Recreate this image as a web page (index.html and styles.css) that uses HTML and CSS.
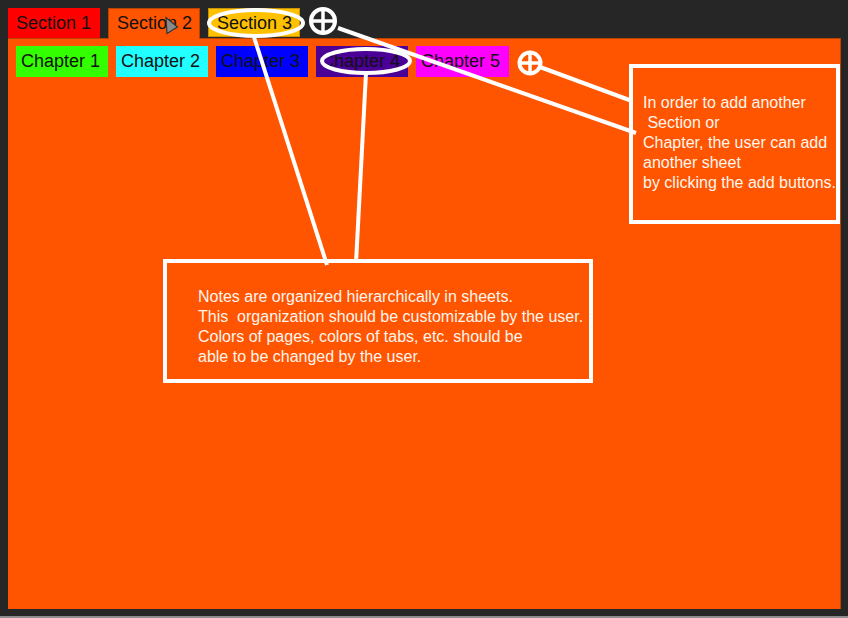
FILE: index.html
```html
<!DOCTYPE html>
<html>
<head>
<meta charset="utf-8">
<link rel="stylesheet" href="styles.css">
</head>
<body>
<div class="app">
  <div class="section-tabs">
    <div class="tab sec1">Section 1</div>
    <div class="tab sec2">Section 2</div>
    <div class="tab sec3">Section 3</div>
    <svg class="add add-section" width="30" height="30" viewBox="0 0 30 30">
      <circle cx="15" cy="15" r="12" fill="none" stroke="#fff" stroke-width="4"/>
      <line x1="3" y1="15" x2="27" y2="15" stroke="#fff" stroke-width="3.5"/>
      <line x1="15" y1="3" x2="15" y2="27" stroke="#fff" stroke-width="3.5"/>
    </svg>
  </div>
  <div class="panel">
    <div class="chapter-tabs">
      <div class="tab ch1">Chapter 1</div>
      <div class="tab ch2">Chapter 2</div>
      <div class="tab ch3">Chapter 3</div>
      <div class="tab ch4">Chapter 4</div>
      <div class="tab ch5">Chapter 5</div>
      <svg class="add add-chapter" width="26" height="26" viewBox="0 0 26 26">
        <circle cx="13" cy="13" r="10.5" fill="none" stroke="#fff" stroke-width="4"/>
        <line x1="2.5" y1="13" x2="23.5" y2="13" stroke="#fff" stroke-width="3.5"/>
        <line x1="13" y1="2.5" x2="13" y2="23.5" stroke="#fff" stroke-width="3.5"/>
      </svg>
    </div>
  </div>

  <div class="note note-main">
    Notes are organized hierarchically in sheets.<br>
    This&nbsp; organization should be customizable by the user.<br>
    Colors of pages, colors of tabs, etc. should be<br>
    able to be changed by the user.
  </div>
  <div class="note note-add">
    In order to add another<br>
    &nbsp;Section or<br>
    Chapter, the user can add<br>
    another sheet<br>
    by clicking the add buttons.
  </div>

  <svg class="overlay" width="848" height="618" viewBox="0 0 848 618">
    <g fill="none" stroke="#fff" stroke-width="4">
      <ellipse cx="256" cy="23" rx="47" ry="13"/>
      <ellipse cx="366" cy="61" rx="44" ry="12"/>
      <line x1="254" y1="37" x2="327" y2="265"/>
      <line x1="366" y1="73" x2="356" y2="263"/>
      <line x1="338" y1="28" x2="636" y2="133"/>
      <line x1="540" y1="67" x2="632" y2="101"/>
    </g>
    <polygon points="166,17.5 177.5,27 167,33.5" fill="#8a8a8a" stroke="#333" stroke-width="1.2"/>
  </svg>
</div>
</body>
</html>
```
FILE: styles.css
```css
* { box-sizing: border-box; }
html, body { margin: 0; padding: 0; }
body {
  background: #262626;
  font-family: "Liberation Sans", Arial, sans-serif;
}
.app {
  position: relative;
  width: 848px;
  height: 618px;
  padding: 8px 8px 0 8px;
  border-bottom: 2px solid #8e8e8e;
}
.section-tabs {
  display: flex;
  align-items: flex-start;
  gap: 8px;
  height: 30px;
}
.tab {
  width: 92px;
  font-size: 18px;
  color: #111;
  white-space: nowrap;
  overflow: hidden;
}
.section-tabs .tab {
  height: 30px;
  line-height: 31px;
  padding-left: 8px;
}
.sec1 { background: #ff0000; }
.sec2 {
  background: #ff5400;
  border: 1px solid #b84400;
  border-bottom: none;
  height: 31px !important;
  line-height: 29px !important;
  position: relative;
  z-index: 1;
}
.sec3 {
  background: #ffc000;
  border: 1px solid #c89200;
  height: 29px !important;
  line-height: 29px !important;
}
.add-section { margin-top: -2px; margin-left: 0; }
.panel {
  width: 833px;
  height: 571px;
  background: #ff5400;
  border: 1px solid #b84400;
  border-bottom: none;
  border-left: none;
}
.chapter-tabs {
  display: flex;
  align-items: center;
  gap: 8px;
  padding: 7px 0 0 8px;
}
.chapter-tabs .tab {
  height: 31px;
  line-height: 31px;
  padding-left: 5px;
}
.ch1 { background: #33ff00; }
.ch2 { background: #22ffff; }
.ch3 { background: #0000ff; }
.ch4 { background: #4b0096; }
.ch5 { background: #ff00ff; width: 93px !important; }
.add-chapter { margin-left: 0; margin-top: 2px; }
.note {
  position: absolute;
  border: 4px solid #fff;
  color: #fff6ee;
  font-size: 16px;
  line-height: 20px;
  white-space: nowrap;
}
.note-main {
  left: 163px;
  top: 259px;
  width: 430px;
  height: 124px;
  padding: 24px 0 0 31px;
}
.note-add {
  left: 629px;
  top: 64px;
  width: 211px;
  height: 160px;
  padding: 25px 0 0 10px;
}
.overlay {
  position: absolute;
  left: 0;
  top: 0;
  z-index: 2;
  pointer-events: none;
}
```
